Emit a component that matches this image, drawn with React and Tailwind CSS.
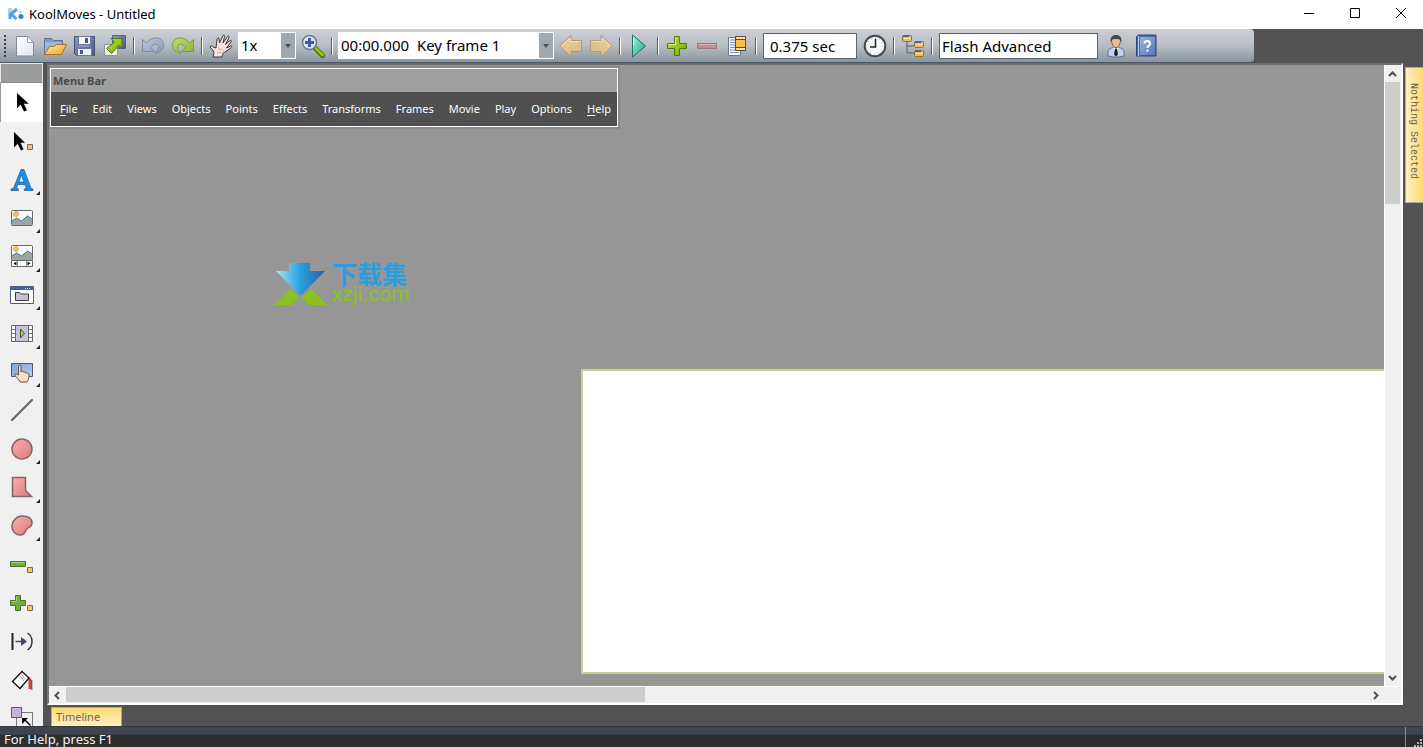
import React, { useState } from 'react';

const svgProps = { width: 24, height: 24, viewBox: '0 0 24 24', fill: 'none', 'aria-hidden': true };

/* ---------- toolbar icons ---------- */

const NewIcon = () => (
  <svg {...svgProps}>
    <path d="M3.5 2.5h11l6 6v13.500h-17z" fill="url(#paper)" stroke="#7f879b" />
    <path d="M14.500 2.500v6h6z" fill="#fff" stroke="#9aa0b0" strokeLinejoin="round" />
  </svg>
);

const OpenIcon = () => (
  <svg {...svgProps}>
    <path d="M1.500 20.500v-16h7l2 2h9v6" fill="#7f9cc9" stroke="#5a719c" />
    <path d="M2 8h17v4H6L2 20z" fill="#9fb6dc" />
    <path d="M1.500 20.500l5-8h5l2-2h10l-5 10z" fill="url(#gold)" stroke="#a87520" strokeLinejoin="round" />
  </svg>
);

const SaveIcon = () => (
  <svg {...svgProps}>
    <path d="M1.500 2.500h20v19h-18l-2-2z" fill="url(#navy)" stroke="#454e78" />
    <path d="M5.500 2.500h12v8h-12z" fill="#f4f6fb" stroke="#6d789c" />
    <path d="M12 4h3v5h-3z" fill="#4b5886" />
    <path d="M4.500 14.500h14v7h-14z" fill="#eceff7" stroke="#6d789c" />
    <path d="M7 16h3v4H7z" fill="#4b5886" />
    <path d="M6 12h11" stroke="#a8b4d8" />
  </svg>
);

const ExportIcon = () => (
  <svg {...svgProps}>
    <path d="M9.500 1.500h13v13h-13z" fill="url(#navy)" stroke="#53628e" />
    <path d="M1.500 10.500h13v11h-13z" fill="#f1f3f7" stroke="#8c93a3" />
    <path d="M8 4.500h11v10l-3-3-7.500 8-5-5 8-6.500z" fill="url(#lime)" stroke="#4d7a0c" strokeLinejoin="round" />
  </svg>
);

const UndoIcon = () => (
  <svg {...svgProps}>
    <path
      d="M1.500 5.500v12h12l-4-4c3-5 9-4 8 1-.4 2-1.500 3.500-3.500 5 5-1 8.500-4 8.500-8.500C22.500 3 12 1 5.500 9z"
      fill="url(#steel)" stroke="#7a89a3" strokeLinejoin="round"
    />
  </svg>
);

const RedoIcon = () => (
  <svg {...svgProps}>
    <path
      d="M22.500 5.500v12h-12l4-4c-3-5-9-4-8 1 .4 2 1.500 3.500 3.500 5-5-1-8.500-4-8.500-8.500C1.500 3 12 1 18.500 9z"
      fill="url(#moss)" stroke="#7b9c33" strokeLinejoin="round"
    />
  </svg>
);

const HandIcon = () => (
  <svg {...svgProps}>
    <path
      d="M4 23c1-3 1-4 .5-6L1 13c.500-1.500 2-1.500 4 .5L7 14l1-9c.5-1.500 2-1.500 2 0l.5 4L14 1.500c1-1 2 0 1.500 1L14 9l4.500-6.500c1-1 2 0 1.500 1L16.500 10.500l4.500-4c1-.5 2 .5 1 1.500l-4.500 6 4-2c1.500-.500 2 .800.500 1.800l-6 4.200c-2 1-2 1-3 5z"
      fill="#f5e2e0" stroke="#3e3737" strokeLinejoin="round"
    />
    <path d="M9 15c3 0 5 1 6 3M8 19c2-1 4-1 5 0" stroke="#d2adaa" />
  </svg>
);

const ZoomIcon = () => (
  <svg {...svgProps}>
    <path d="M14 14l7.500 7.500" stroke="#4a6b12" strokeWidth="5" strokeLinecap="round" />
    <path d="M15 14.500l6.500 6.500" stroke="#8ec614" strokeWidth="3" strokeLinecap="round" />
    <circle cx="8.500" cy="8.500" r="7" fill="#dbe5f4" stroke="#6d7a94" strokeWidth="1.500" />
    <path d="M8.500 4v9M4 8.500h9" stroke="#41589a" strokeWidth="3" />
  </svg>
);

const ArrowIcon = ({ flip }) => (
  <svg {...svgProps} className={flip ? '-scale-x-100' : ''}>
    <path d="M.5 12L12 1.500v5h10.500v11H12v5z" fill="url(#sand)" stroke="#b09878" strokeLinejoin="round" />
    <path d="M3 11.500L11 4v3.500h10.500" stroke="#f3e2bd" />
  </svg>
);

const PlayIcon = () => (
  <svg {...svgProps}>
    <path d="M5.500 1v22L18.500 12z" fill="url(#mint)" stroke="#1c7263" strokeLinejoin="round" />
    <path d="M6.500 3.500v8" stroke="#d8fff1" />
  </svg>
);

const PlusIcon = () => (
  <svg {...svgProps}>
    <path d="M9.500 2.500h5v7h7v5h-7v7h-5v-7h-7v-5h7z" fill="url(#lime)" stroke="#4f7c09" strokeLinejoin="round" />
    <path d="M10.500 10.500v-7M3.500 10.500h7" stroke="#d7f27a" />
  </svg>
);

const MinusIcon = () => (
  <svg {...svgProps}>
    <path d="M2.500 9.500h19v5h-19z" fill="#c18e91" stroke="#96787d" strokeLinejoin="round" />
    <path d="M3.500 10.500h17" stroke="#dbb4b4" />
  </svg>
);

const FramePropsIcon = () => (
  <svg {...svgProps}>
    <path d="M3.500 3.500h12v18h-12z" fill="#f4f6fa" stroke="#69778f" />
    <path d="M5 6h6M5 8.500h6M5 11h6M5 13.500h6M5 16h9M5 18.500h9" stroke="#7d90b5" />
    <path d="M10.500 2.500h10v14h-10z" fill="#fbbf45" stroke="#5c4a30" />
    <path d="M10.500 5.500h10M10.500 13.500h10" stroke="#5c4a30" />
    <path d="M12 4h8M12 15h8" stroke="#fff" strokeWidth="1.500" strokeDasharray="2 1" />
  </svg>
);

const ClockIcon = () => (
  <svg {...svgProps}>
    <circle cx="12" cy="12" r="10.300" fill="#f8f8f8" stroke="#45494e" strokeWidth="2" />
    <circle cx="12" cy="12" r="8" stroke="#9ca1a8" strokeDasharray="1 3.190" />
    <path d="M12.500 5v8H7" stroke="#222" strokeWidth="1.500" />
  </svg>
);

const TreeIcon = () => (
  <svg {...svgProps}>
    <path d="M6 8v11h7M6 12h7" stroke="#4f5a68" />
    {[[1, 1], [13, 7], [13, 16]].map(([x, y]) => (
      <g key={`${x}-${y}`}>
        <rect x={x + 0.5} y={y + 0.5} width="9" height="6" rx="1" fill="#f4bb55" stroke="#99702f" />
        <path d={`M${x + 1} ${y + 1}h6`} stroke="#4766a8" strokeWidth="2" />
        <path d={`M${x + 2} ${y + 3.500}h7`} stroke="#fde4a6" />
      </g>
    ))}
  </svg>
);

const PersonIcon = () => (
  <svg {...svgProps}>
    <path d="M4 22v-4c0-3 3-4 5-4.500h6c2 .5 5 1.500 5 4.500v4c-5 1.500-11 1.500-16 0z" fill="#bfd2f2" stroke="#5c6f98" />
    <path d="M9 13.500h6l-3 6z" fill="#fff" />
    <path d="M11 14.500h2l1 6-2 2-2-2z" fill="#1e2228" />
    <path d="M7.500 6c0-3 2-4 4.500-4s4.500 1 4.500 4c0 4-2 7.500-4.500 7.500S7.500 10 7.500 6z" fill="#e9bd8c" stroke="#7c5a39" />
    <path d="M6.500 8c-.5-5 2-7 5.500-7s6 2 5.500 7c-1-2.500-3-3-5.500-3S7.500 5.500 6.500 8z" fill="#444a50" />
  </svg>
);

const HelpBookIcon = () => (
  <svg {...svgProps}>
    <path d="M2.500 2.500l2-1.500h17.500v21h-19.500z" fill="#4a68a8" stroke="#2f467d" />
    <path d="M6 3h15v18H6z" fill="url(#book)" />
    <path d="M4.500 2v20" stroke="#b9c9e8" />
    <path d="M10.500 9.500c0-3.500 5.500-3.500 5.500 0 0 2-2.500 2-2.500 4.500M13.500 15.500v2" stroke="#fff" strokeWidth="2" />
  </svg>
);

/* ---------- tool palette icons ---------- */

const Handle = () => <path d="M17.500 14.500h5v5h-5z" fill="#fdc55a" stroke="#7c6d55" />;

const SelectIcon = () => (
  <svg {...svgProps}>
    <path d="M7 2v15.500l3.700-3.700L14 20.500l3-1.300-3.200-6.500h5z" fill="#000" />
  </svg>
);

const SubSelectIcon = () => (
  <svg {...svgProps}>
    <path d="M4 3v15.500l3.700-3.700L11 21.500l2.500-1.300-3-6.500H15z" fill="#000" />
    <path d="M17.500 15.500h5v5h-5z" fill="#fdc55a" stroke="#7c6d55" />
  </svg>
);

const TextIcon = () => (
  <svg {...svgProps}>
    <path
      d="M1 22.500h7.500v-1.500l-2-.7 1.300-3.800h7l1.500 3.800-2 .7v1.500h8.700v-1.500l-2-.7L14 1.500h-3L3.500 20.300l-2.500.7zM8.800 14l2.500-7 2.700 7z"
      fill="#1190f2" stroke="#26588a" strokeWidth=".7" fillRule="evenodd"
    />
  </svg>
);

const Landscape = ({ h }) => (
  <>
    <path d={`M1.500 4.500h21v${h}h-21z`} fill="#f8f9fa" />
    <path d="M2 15l4.500-3 5 3 6-5 4.500 3v6.500H2z" fill="#9da69f" />
    <path d="M2 15l4.500-3 5 3 6-5 4.500 3" stroke="#3f7aa5" />
    <circle cx="6" cy="8" r="2.500" fill="#fcc35d" stroke="#c98f30" strokeWidth=".6" />
  </>
);

const ImageIcon = () => (
  <svg {...svgProps}>
    <Landscape h={15} />
    <rect x="1.500" y="4.500" width="21" height="15" rx="1" stroke="#62666f" />
  </svg>
);

const ImageScrollIcon = () => (
  <svg {...svgProps}>
    <g transform="translate(0 -4)"><Landscape h={20} /></g>
    <path d="M1.500 15.500h21v6h-21z" fill="#fff" stroke="#62666f" />
    <path d="M6.500 16.500L3.500 18.500l3 2zM17.500 16.500l3 2-3 2z" fill="#000" />
    <path d="M7.500 16v5M16.500 16v5" stroke="#8a8d94" />
    <rect x="1.500" y=".5" width="21" height="15" rx="1" stroke="#62666f" />
  </svg>
);

const WindowIcon = () => (
  <svg {...svgProps}>
    <path d="M.5 3.500h23v17H.5z" fill="#fff" stroke="#4d5c80" />
    <path d="M1 4h22v3H1z" fill="#3c62b0" />
    <path d="M15 5.500h6" stroke="#cfdcf5" strokeDasharray="1 1" />
    <path d="M5.500 17.500v-8h4l1 1.500h8v6.500z" fill="#cdbdd6" stroke="#3d3846" />
  </svg>
);

const MovieClipIcon = () => (
  <svg {...svgProps}>
    <path d="M1.500 3.500h21v16h-21z" fill="#fff" stroke="#666" />
    <path d="M5.500 3.500h13v16h-13z" fill="#c7bfdc" stroke="#666" />
    <path d="M1.500 7.500h4M1.500 11.500h4M1.500 15.500h4M18.500 7.500h4M18.500 11.500h4M18.500 15.500h4" stroke="#777" />
    <path d="M10.500 7v9l4-4.500z" fill="#9bd260" stroke="#375a20" />
  </svg>
);

const ButtonIcon = () => (
  <svg {...svgProps}>
    <path d="M1.500 3.500h21v13h-21z" fill="url(#sky)" stroke="#4a5876" />
    <path
      d="M8.500 14V6.500c0-1.500 2.500-1.500 2.500 0V12c.800-1 2.500-1 3 .5.800-.8 2.300-.5 2.500.8 1-.5 2.500 0 2.500 1.700 0 4-1 5-2 7h-7c-1-3-3.500-4.500-5.500-7 0-1.500 2-1.500 4 0z"
      fill="#fbdfc5" stroke="#6b4c37" strokeLinejoin="round"
    />
  </svg>
);

const LineIcon = () => (
  <svg {...svgProps}>
    <path d="M2 21L22 1" stroke="#6a6063" strokeWidth="2" strokeLinecap="round" />
  </svg>
);

const CircleIcon = () => (
  <svg {...svgProps}>
    <circle cx="12" cy="12" r="10" fill="url(#rose)" stroke="#7e6768" strokeWidth="1.500" />
  </svg>
);

const PolygonIcon = () => (
  <svg {...svgProps}>
    <path d="M2.500 1.500h13v13l6 6h-19z" fill="url(#rose)" stroke="#7e6768" strokeWidth="1.500" />
  </svg>
);

const BlobIcon = () => (
  <svg {...svgProps}>
    <path
      d="M12 2c6 0 10 2.500 10 7 0 5-5 4-6 7s-3 5-6 5c-5 0-8-4-8-9S6.500 2 12 2z"
      fill="url(#rose)" stroke="#7e6768" strokeWidth="1.500"
    />
  </svg>
);

const RemovePointIcon = () => (
  <svg {...svgProps}>
    <path d="M.5 8.500h15v5H.5z" fill="#6fb13b" stroke="#4c6f37" />
    <path d="M1.500 9.500h13" stroke="#a5d56f" />
    <Handle />
  </svg>
);

const AddPointIcon = () => (
  <svg {...svgProps}>
    <path d="M5.500 4.500h5v5h5v5h-5v5h-5v-5h-5v-5h5z" fill="#6fb13b" stroke="#4c6f37" />
    <path d="M6.500 10V5.500M1.500 10.500h5" stroke="#a5d56f" />
    <Handle />
  </svg>
);

const MorphIcon = () => (
  <svg {...svgProps}>
    <path d="M2.500 3v17" stroke="#222" strokeWidth="2" />
    <path d="M5.500 11.500h8" stroke="#4c4266" strokeWidth="1.500" />
    <path d="M11 7l6 4.500-6 4.500z" fill="#4c4266" />
    <path d="M17.500 3c6 4 6 13 0 17" stroke="#333" strokeWidth="1.500" />
  </svg>
);

const FillIcon = () => (
  <svg {...svgProps}>
    <path d="M15 10c3 0 4 0 5 2v9" stroke="#c8493b" strokeWidth="3" />
    <path d="M2.500 13.500l9.500-10 7 6.500-9 10.500z" fill="#fff" stroke="#111" strokeWidth="1.300" />
    <path d="M9 7l5 6M11 5.500l4 6" stroke="#a9a9a9" />
    <path d="M21.800 12v10" stroke="#613029" />
  </svg>
);

const TransformIcon = () => (
  <svg {...svgProps}>
    <path d="M6.500 5.500h16v17h-16z" stroke="#000" strokeDasharray="1 1" />
    <path d="M1.500.5h10v10h-10z" fill="#c7b4d4" stroke="#625b6b" />
    <path d="M12 11h6l-2 2 5 5-1 1-5-5-3 3z" fill="#000" />
  </svg>
);

const tools = [
  { id: 'Select', icon: SelectIcon },
  { id: 'Select points', icon: SubSelectIcon },
  { id: 'Text', icon: TextIcon, more: true },
  { id: 'Image', icon: ImageIcon, more: true },
  { id: 'Image component', icon: ImageScrollIcon, more: true },
  { id: 'Window component', icon: WindowIcon, more: true },
  { id: 'Movie clip', icon: MovieClipIcon, more: true },
  { id: 'Button', icon: ButtonIcon, more: true },
  { id: 'Line', icon: LineIcon },
  { id: 'Circle', icon: CircleIcon, more: true },
  { id: 'Polygon', icon: PolygonIcon, more: true },
  { id: 'Freehand', icon: BlobIcon, more: true },
  { id: 'Remove point', icon: RemovePointIcon },
  { id: 'Add point', icon: AddPointIcon },
  { id: 'Morph', icon: MorphIcon },
  { id: 'Fill', icon: FillIcon },
  { id: 'Transform', icon: TransformIcon },
];

const menus = [
  'File', 'Edit', 'Views', 'Objects', 'Points', 'Effects',
  'Transforms', 'Frames', 'Movie', 'Play', 'Options', 'Help',
];

const Gradients = () => (
  <svg className="absolute h-0 w-0" aria-hidden="true">
    <defs>
      {[
        ['paper', '#ffffff', '#dfe3ee'],
        ['gold', '#ffe9a0', '#f0a326'],
        ['navy', '#8c9ac9', '#4c5888'],
        ['lime', '#c3e835', '#6ba50b'],
        ['steel', '#bac7dc', '#8b9bb8'],
        ['moss', '#c0da6f', '#8fb53e'],
        ['sand', '#eccf96', '#d8ba84'],
        ['mint', '#a6f5d8', '#17a381'],
        ['book', '#9fb2dc', '#5876b8'],
        ['sky', '#7ea1da', '#b7cdf0'],
        ['rose', '#ffaaa9', '#d97f80'],
      ].map(([id, from, to]) => (
        <linearGradient key={id} id={id} x1="0" y1="0" x2="1" y2="1">
          <stop offset="0" stopColor={from} />
          <stop offset="1" stopColor={to} />
        </linearGradient>
      ))}
    </defs>
  </svg>
);

const BarButton = ({ label, children }) => (
  <button type="button" aria-label={label} className="flex h-8 w-[30px] shrink-0 items-center justify-center">
    {children}
  </button>
);

const Separator = () => (
  <div className="flex w-2 shrink-0 justify-center">
    <div className="h-[18px] w-[2px] border-l border-[#565c63] bg-white" />
  </div>
);

const DropDown = ({ label, options, className }) => (
  <div className={`relative h-[27px] shrink-0 border border-white bg-white ${className}`}>
    <select aria-label={label} className="h-full w-full appearance-none bg-white pr-4 pl-[2px] text-[15px] text-black outline-none">
      {options.map((option) => (
        <option key={option}>{option}</option>
      ))}
    </select>
    <div className="pointer-events-none absolute inset-y-0 right-0 flex w-[14px] items-center justify-center bg-[#a0a8b0]">
      <svg width="6" height="4" viewBox="0 0 6 4"><path d="M0 0h6L3 4z" fill="#4c5056" /></svg>
    </div>
  </div>
);

const Chevron = ({ d }) => (
  <svg width="9" height="9" viewBox="0 0 9 9" fill="none">
    <path d={d} stroke="#505050" strokeWidth="2" />
  </svg>
);

const TitleBar = () => (
  <header className="flex h-[29px] shrink-0 items-center justify-between bg-white pl-2">
    <div className="flex items-center gap-[5px] pb-px">
      <svg width="16" height="14" viewBox="0 0 16 14" fill="none" aria-hidden="true">
        <path d="M2 1.500v10.500M9 2L3 7l5.500 5" stroke="#4aa3ee" strokeWidth="3" strokeLinejoin="round" />
        <path d="M2 2v4" stroke="#9cd2fb" strokeWidth="2" />
        <circle cx="13" cy="9.500" r="2.500" fill="#2e80dc" />
        <circle cx="12.500" cy="5" r="1" fill="#7cc0f6" />
      </svg>
      <h1 className="text-[13px] leading-5 text-black">KoolMoves - Untitled</h1>
    </div>
    <div className="flex h-full">
      {[
        ['Minimize', 'M1 6.500h10'],
        ['Maximize', 'M1.500 1.500h9v9h-9z'],
        ['Close', 'M1 1l10 10M11 1L1 11'],
      ].map(([label, d]) => (
        <button key={label} type="button" aria-label={label} className="flex w-[46px] items-center justify-center pb-[3px] pl-[2px]">
          <svg width="12" height="12" viewBox="0 0 12 12" fill="none"><path d={d} stroke="#000" /></svg>
        </button>
      ))}
    </div>
  </header>
);

const Toolbar = () => (
  <div className="flex h-[34px] shrink-0 bg-[#535353]">
    <div className="flex items-center rounded-r-sm border-b border-[#4b5865] bg-linear-to-b from-[#cdd1d6] via-[#b8bdc4] to-[#8b959e] pr-[93px] pl-1">
      <div className="mr-1 h-[22px] w-[2px] shrink-0 bg-[repeating-linear-gradient(#3d4247_0_2px,transparent_2px_4px)]" />
      <BarButton label="New"><NewIcon /></BarButton>
      <BarButton label="Open"><OpenIcon /></BarButton>
      <BarButton label="Save"><SaveIcon /></BarButton>
      <BarButton label="Export"><ExportIcon /></BarButton>
      <Separator />
      <BarButton label="Undo"><UndoIcon /></BarButton>
      <BarButton label="Redo"><RedoIcon /></BarButton>
      <Separator />
      <BarButton label="Pan"><HandIcon /></BarButton>
      <DropDown label="Zoom level" options={['1x', '2x', '4x']} className="mx-[2px] w-[58px]" />
      <BarButton label="Zoom"><ZoomIcon /></BarButton>
      <Separator />
      <DropDown label="Frame" options={['00:00.000\u00a0 Key frame 1']} className="mx-[2px] w-[216px]" />
      <BarButton label="Previous frame"><ArrowIcon /></BarButton>
      <BarButton label="Next frame"><ArrowIcon flip /></BarButton>
      <Separator />
      <BarButton label="Play"><PlayIcon /></BarButton>
      <Separator />
      <BarButton label="Add frame"><PlusIcon /></BarButton>
      <BarButton label="Delete frame"><MinusIcon /></BarButton>
      <BarButton label="Frame properties"><FramePropsIcon /></BarButton>
      <Separator />
      <input
        aria-label="Duration"
        defaultValue="0.375 sec"
        className="mx-[3px] h-[26px] w-[94px] shrink-0 border border-[#60656b] bg-white pl-1.5 text-[15px] text-black outline-none"
      />
      <BarButton label="Timing"><ClockIcon /></BarButton>
      <Separator />
      <BarButton label="Structure"><TreeIcon /></BarButton>
      <Separator />
      <input
        aria-label="Export format"
        defaultValue="Flash Advanced"
        className="mx-[3px] h-[26px] w-[159px] shrink-0 border border-[#60656b] bg-white pl-[2px] text-[15px] text-black outline-none"
      />
      <BarButton label="User level"><PersonIcon /></BarButton>
      <BarButton label="Help"><HelpBookIcon /></BarButton>
    </div>
  </div>
);

const ToolPalette = () => {
  const [active, setActive] = useState('Select');

  return (
    <aside className="flex w-[43px] shrink-0 flex-col overflow-hidden bg-[#f0f0f0]">
      <div className="h-5 shrink-0 border border-[#e6e6e6] border-b-[#8c8e8d] bg-[#9b9d9c]" />
      {tools.map(({ id, icon: Icon, more }) => (
        <button
          key={id}
          type="button"
          aria-label={id}
          onClick={() => setActive(id)}
          className={`relative flex h-[38px] shrink-0 items-center justify-center even:h-[39px] ${
            active === id ? 'border-l border-[#999] bg-white' : ''
          }`}
        >
          <Icon />
          {more && (
            <svg className="absolute right-[3px] bottom-1" width="4" height="4" viewBox="0 0 4 4">
              <path d="M4 0v4H0z" fill="#222" />
            </svg>
          )}
        </button>
      ))}
    </aside>
  );
};

const MenuPanel = () => (
  <div className="absolute top-[3px] left-px border border-white shadow-[0_0_0_2px_#8b8b8b]">
    <div className="h-[23px] bg-[#9da09e] pl-[2px] text-[11px] leading-[23px] font-bold text-[#4a4a4a]">Menu Bar</div>
    <nav className="flex h-[34px] items-center gap-[15px] bg-[#505050] pr-[6px] pl-[9px] text-[11px] text-white">
      {menus.map((menu) => (
        <button key={menu} type="button">
          {menu === 'File' || menu === 'Help' ? (
            <>
              <u className="underline-offset-2">{menu[0]}</u>
              {menu.slice(1)}
            </>
          ) : (
            menu
          )}
        </button>
      ))}
    </nav>
  </div>
);

const Watermark = () => (
  <div className="absolute top-[197px] left-[225px] flex items-start gap-[5px]">
    <svg width="53" height="44" viewBox="0 0 53 44" aria-hidden="true">
      <defs>
        <linearGradient id="drop" x1="0" y1="0" x2="1" y2="0">
          <stop offset="0" stopColor="#a8e2fb" />
          <stop offset=".5" stopColor="#27a0dd" />
          <stop offset="1" stopColor="#2a5fb0" />
        </linearGradient>
      </defs>
      <path d="M15 1h21v8h15L26.500 34 2 9h13z" fill="url(#drop)" />
      <path d="M16 27l9.500 8.500L18 43H0zM37 27l16 16H35l-7.500-7.500z" fill="#8ac31d" />
    </svg>
    <div>
      <div className="font-['Noto_Sans_CJK_SC',sans-serif] text-[25px] leading-[22px] font-bold text-[#2b9fdc]">下载集</div>
      <div className="font-[Roboto,sans-serif] text-[21px] leading-5 text-[#8ac31d]">xzji.com</div>
    </div>
  </div>
);

const Workspace = () => (
  <main className="flex min-h-0 flex-1 flex-col border-2 border-t-[#6c6c6c] border-r-white border-b-white border-l-[#747474] bg-[#f0f0f0]">
    <div className="flex min-h-0 flex-1">
      <div className="relative flex-1 overflow-hidden bg-[#969696]">
        <Watermark />
        <div className="absolute top-[304px] -right-px left-[532px] h-[305px] border-2 border-r-0 border-[#cccc99] bg-white" />
        <MenuPanel />
      </div>
      <div className="flex w-[17px] shrink-0 flex-col border-l border-white">
        <button type="button" aria-label="Scroll up" className="flex h-[17px] items-center justify-center pr-px">
          <Chevron d="M1 7l3.500-3.500L8 7" />
        </button>
        <div className="flex-1">
          <div className="h-[122px] w-[15px] bg-[#cdcdcd]" />
        </div>
        <button type="button" aria-label="Scroll down" className="flex h-[17px] items-center justify-center pr-px">
          <Chevron d="M1 3l3.500 3.500L8 3" />
        </button>
      </div>
    </div>
    <div className="flex h-[17px] shrink-0 border-t border-white pr-[17px]">
      <button type="button" aria-label="Scroll left" className="flex w-[17px] items-center justify-center">
        <Chevron d="M6 1L2.500 4.500 6 8" />
      </button>
      <div className="flex-1">
        <div className="h-[15px] w-[579px] bg-[#cdcdcd]" />
      </div>
      <button type="button" aria-label="Scroll right" className="flex w-[17px] items-center justify-center">
        <Chevron d="M3 1l3.500 3.500L3 8" />
      </button>
    </div>
  </main>
);

const App = () => (
  <div className="flex h-screen flex-col overflow-hidden bg-[#535353] font-['Noto_Sans','Open_Sans',sans-serif]">
    <Gradients />
    <TitleBar />
    <Toolbar />
    <div className="flex min-h-0 flex-1">
      <ToolPalette />
      <div className="flex min-w-0 flex-1 flex-col pl-1">
        <Workspace />
        <div className="flex h-[21px] shrink-0 items-end pl-1">
          <button
            type="button"
            className="h-[19px] border border-b-0 border-[#a9a9a9] bg-linear-to-b from-[#ffd970] to-[#fff0c0] pr-[21px] pl-1 text-[11px] text-[#6f6650]"
          >
            Timeline
          </button>
        </div>
      </div>
      <div className="flex w-5 shrink-0 flex-col items-end pt-1">
        <button
          type="button"
          className="flex h-[136px] w-[18px] justify-start border border-r-0 border-[#a9a9a9] bg-linear-to-r from-[#fff0c0] to-[#ffd970] pt-[15px] pr-1 font-['Liberation_Mono',monospace] text-[10px] leading-3 text-[#6b624e] [writing-mode:vertical-rl]"
        >
          Nothing Selected
        </button>
      </div>
    </div>
    <footer className="flex h-[21px] shrink-0 justify-between border-t border-[#3a3a3d] bg-linear-to-b from-[#3f4452] from-35% to-[#2d2d2d] to-40% pl-1 text-[#f2f2f2]">
      <span className="pt-1 text-[13px] leading-4">For Help, press F1</span>
      <div className="flex w-[18px] items-end justify-end border-l border-[#8a8a8a]">
        <svg width="9" height="9" viewBox="0 0 9 9">
          <path d="M6 1h2v2H6zM3 4h2v2H3zM6 4h2v2H6zM0 7h2v2H0zM3 7h2v2H3zM6 7h2v2H6z" fill="#b5b5b5" />
        </svg>
      </div>
    </footer>
  </div>
);

export default App;
